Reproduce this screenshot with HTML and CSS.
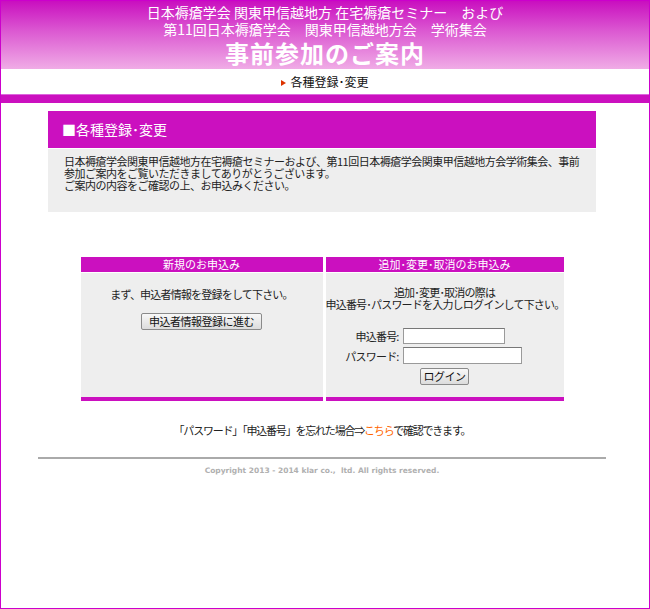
FILE: index.html
```html
<!DOCTYPE html>
<html lang="ja">
<head>
    <meta charset="UTF-8">
    <title>事前参加のご案内</title>
    <link rel="stylesheet" href="styles.css">
</head>
<body>
    <div class="page">
        <!-- Header -->
        <header class="site-header">
            <p class="site-header__line">日本褥瘡学会 関東甲信越地方 在宅褥瘡セミナー　および</p>
            <p class="site-header__line">第11回日本褥瘡学会　関東甲信越地方会　学術集会</p>
            <h1 class="site-header__title">事前参加のご案内</h1>
        </header>

        <nav class="crumb"><span class="crumb__mark"></span>各種登録･変更</nav>
        <div class="crumb-bar"></div>

        <div class="wrap">
            <!-- Intro box -->
            <section class="intro">
                <h2 class="intro__title">■各種登録･変更</h2>
                <p class="intro__text">日本褥瘡学会関東甲信越地方在宅褥瘡セミナーおよび、第11回日本褥瘡学会関東甲信越地方会学術集会、事前参加ご案内をご覧いただきましてありがとうございます。<br>ご案内の内容をご確認の上、お申込みください。</p>
            </section>

            <!-- Application panels -->
            <div class="panels">
                <div class="panel panel--new">
                    <div class="panel__head">新規のお申込み</div>
                    <div class="panel__body">
                        <p class="panel__text">まず、申込者情報を登録をして下さい。</p>
                        <button class="btn btn--register">申込者情報登録に進む</button>
                    </div>
                </div>
                <div class="panel panel--edit">
                    <div class="panel__head">追加･変更･取消のお申込み</div>
                    <div class="panel__body">
                        <p class="panel__text">追加･変更･取消の際は<br>申込番号･パスワードを入力しログインして下さい。</p>
                        <div class="login">
                            <label class="login__label" for="appNo">申込番号:</label>
                            <input class="login__input login__input--id" id="appNo" type="text">
                            <label class="login__label" for="password">パスワード:</label>
                            <input class="login__input login__input--pw" id="password" type="password">
                        </div>
                        <button class="btn btn--login">ログイン</button>
                    </div>
                </div>
            </div>

            <p class="forgot">「パスワード」「申込番号」を忘れた場合⇒<a href="#">こちら</a>で確認できます。</p>

            <!-- Footer -->
            <footer class="footer">Copyright 2013 - 2014 klar co.,&nbsp; ltd. All rights reserved.</footer>
        </div>
    </div>
</body>
</html>
```

FILE: styles.css
```css
body {
    margin: 0;
    padding: 0;
    font-family: "Noto Sans CJK JP", "Noto Sans", sans-serif;
    color: #222222;
    background: #ffffff;
}

.page {
    min-height: 100vh;
    box-sizing: border-box;
    border: 1px solid #cc00cc;
}

/* Header */
.site-header {
    height: 68px;
    box-sizing: border-box;
    padding-top: 3px;
    background: linear-gradient(to bottom, #c90fbf 0%, #dc5ad2 45%, #f0ace6 100%);
    color: #ffffff;
    text-align: center;
}

.site-header__line {
    margin: 0;
    font-size: 14px;
    line-height: 17px;
}

.site-header__title {
    margin: 0;
    font-size: 24px;
    line-height: 30px;
    font-weight: bold;
    letter-spacing: 1px;
}

.crumb {
    height: 25px;
    line-height: 25px;
    text-align: center;
    font-size: 12px;
    color: #111111;
}

.crumb__mark {
    display: inline-block;
    width: 0;
    height: 0;
    border-top: 3px solid transparent;
    border-bottom: 3px solid transparent;
    border-left: 5px solid #dd3300;
    margin-right: 4px;
    vertical-align: 1px;
}

.crumb-bar {
    height: 8px;
    background: #cb10bf;
    border-top: 1px solid #dd66dd;
}

.wrap {
    width: 568px;
    margin-left: 37px;
}

/* Intro box */
.intro {
    margin: 8px 10px 0;
}

.intro__title {
    margin: 0;
    height: 37px;
    line-height: 37px;
    padding-left: 14px;
    background: #cb10bf;
    color: #ffffff;
    font-size: 14px;
    font-weight: normal;
}

.intro__text {
    margin: 1px 0 0;
    height: 63px;
    box-sizing: border-box;
    padding: 6px 14px 0 16px;
    background: #eeeeee;
    font-size: 11px;
    line-height: 12px;
    letter-spacing: -0.5px;
}

/* Panels */
.panels {
    display: flex;
    gap: 3px;
    width: 483px;
    margin: 45px auto 0;
}

.panel--new {
    width: 242px;
}

.panel--edit {
    width: 238px;
}

.panel__head {
    height: 15px;
    line-height: 15px;
    background: #cb10bf;
    color: #ffffff;
    font-size: 11px;
    text-align: center;
}

.panel__body {
    margin-top: 1px;
    height: 128px;
    box-sizing: border-box;
    background: #eeeeee;
    border-bottom: 4px solid #cb10bf;
    text-align: center;
    font-size: 11px;
    letter-spacing: -0.8px;
}

.panel--new .panel__body {
    padding-top: 15px;
}

.panel--edit .panel__body {
    padding-top: 13px;
}

.panel__text {
    margin: 0;
    line-height: 12px;
    white-space: nowrap;
}

.btn {
    font-family: inherit;
    font-size: 11px;
    letter-spacing: -0.5px;
    color: #111111;
    height: 17px;
    padding: 0 6px;
    line-height: 15px;
    border: 1px solid #8a8a8a;
    border-radius: 2px;
    background: linear-gradient(to bottom, #f8f8f8, #dcdcdc);
    cursor: pointer;
}

.btn--register {
    margin-top: 13px;
    width: 121px;
}

.login {
    display: grid;
    grid-template-columns: auto auto;
    column-gap: 4px;
    row-gap: 3px;
    justify-content: center;
    align-items: center;
    margin-top: 18px;
    padding-right: 22px;
}

.login__label {
    justify-self: end;
    font-size: 11px;
}

.login__input {
    justify-self: start;
    height: 17px;
    box-sizing: border-box;
    border: 1px solid #9a9a9a;
    border-top-color: #777777;
    background: #ffffff;
    padding: 0 2px;
}

.login__input--id {
    width: 102px;
    height: 16px;
}

.login__input--pw {
    width: 119px;
}

.btn--login {
    display: block;
    margin: 4px auto 0;
    width: 49px;
    padding: 0;
}

.forgot {
    margin: 22px 0 0;
    text-align: center;
    font-size: 11px;
    line-height: 14px;
    letter-spacing: -1.2px;
}

.forgot a {
    color: #ff6600;
    text-decoration: none;
}

.footer {
    margin-top: 20px;
    border-top: 2px solid #aaaaaa;
    padding-top: 6px;
    text-align: center;
    font-family: "DejaVu Sans", sans-serif;
    font-size: 7.5px;
    line-height: 12px;
    font-weight: bold;
    color: #b0b0b0;
    white-space: pre;
}
```
